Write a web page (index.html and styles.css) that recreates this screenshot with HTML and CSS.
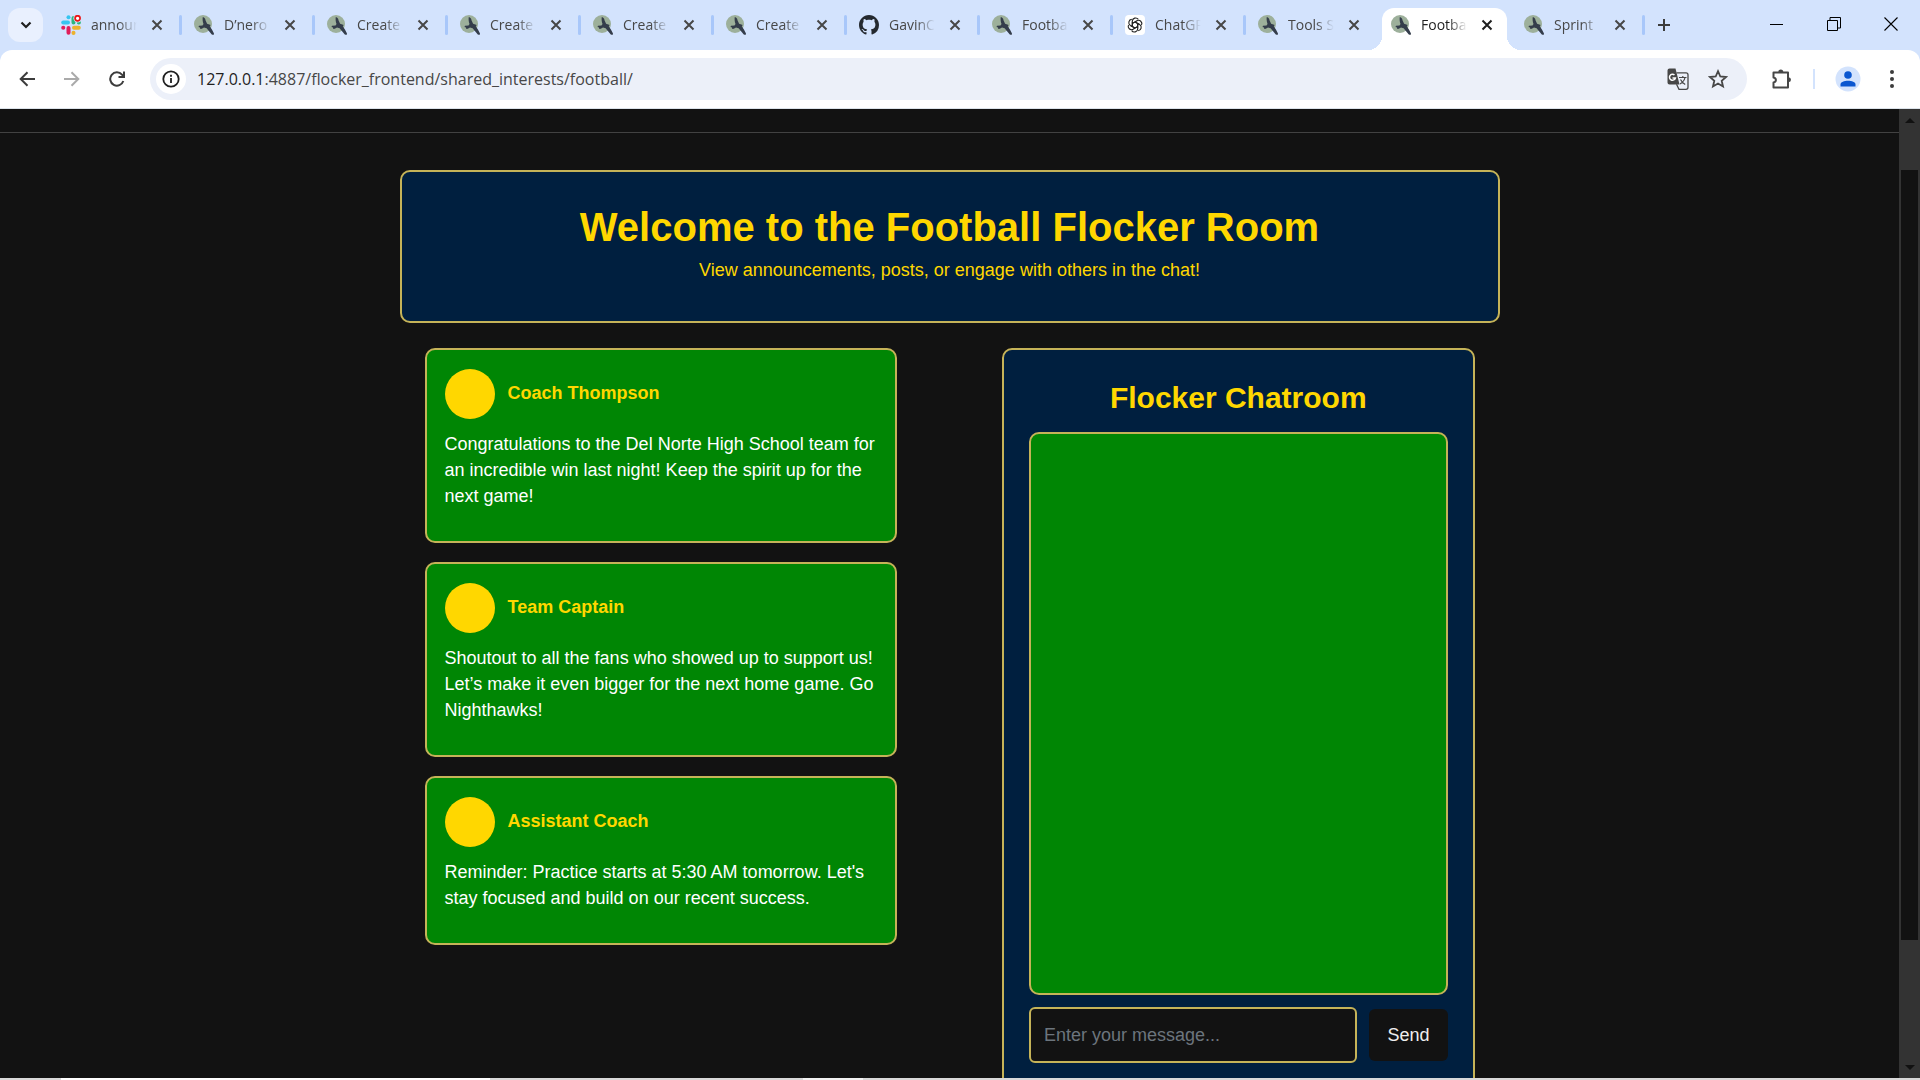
FILE: index.html
```html
<!DOCTYPE html>
<html lang="en">
<head>
<meta charset="utf-8">
<title>Football Flocker Room</title>
<link rel="stylesheet" href="styles.css">
</head>
<body>
<svg class="sprite" aria-hidden="true">
  <symbol id="bird" viewBox="0 0 20 20">
    <circle cx="9" cy="9" r="9" fill="#9db09b"/>
    <path d="M8.800 2c1.700.4 2.500 1.700 2.700 3.200l1.600 3.500 3.600 1.200-.9 1.300c1.500 2.300 3.100 4.700 4.200 7.300l-.5 1.500-1.700-.6-5.200-6.200-2.600-.8-2.200 1.300-1.500.3-.3-1.500-1.500-.5.500-1.200 3.500-.3 1-1.400c-.7-2.200-1.200-4.600-.7-7.100z" fill="#343d4b"/>
  </symbol>
  <symbol id="cross" viewBox="0 0 12 12">
    <path d="M1.500 1.500l9 9m0-9l-9 9" fill="none" stroke="currentColor" stroke-width="2"/>
  </symbol>
</svg>

<header class="browser">
  <div class="tabstrip">
    <button class="tab-search" aria-label="Search tabs"><svg width="12" height="8" viewBox="0 0 12 8"><path d="M1.500 1.500L6 6l4.500-4.500" fill="none" stroke="#1f1f1f" stroke-width="2.200"/></svg></button>
    <nav class="tabs" aria-label="Tabs">
      <div class="tab"><svg class="favicon" viewBox="0 0 20 20"><g stroke-width="4" stroke-linecap="round" fill="none"><path d="M2.200 7.500H7" stroke="#36c5f0"/><path d="M7.500 2.200v.1" stroke="#36c5f0"/><path d="M12.500 3v4.500M17.800 7.500h.1" stroke="#2eb67d"/><path d="M13 12.700h4.800M12.500 17.800v.1" stroke="#ecb22e"/><path d="M7.500 13v4.800M2.200 12.700h.1" stroke="#e01e5a"/></g><circle cx="16.600" cy="3.300" r="4.200" fill="#d3e3fd"/><circle cx="16.600" cy="3.300" r="2.500" fill="#fff" stroke="#eb1616" stroke-width="1.700"/></svg><a class="tab-title" href="#">announ</a><button class="tab-close" aria-label="Close tab"><svg><use href="#cross"/></svg></button></div>
      <div class="tab"><svg class="favicon"><use href="#bird"/></svg><a class="tab-title" href="#">D’nero</a><button class="tab-close" aria-label="Close tab"><svg><use href="#cross"/></svg></button></div>
      <div class="tab"><svg class="favicon"><use href="#bird"/></svg><a class="tab-title" href="#">Create</a><button class="tab-close" aria-label="Close tab"><svg><use href="#cross"/></svg></button></div>
      <div class="tab"><svg class="favicon"><use href="#bird"/></svg><a class="tab-title" href="#">Create</a><button class="tab-close" aria-label="Close tab"><svg><use href="#cross"/></svg></button></div>
      <div class="tab"><svg class="favicon"><use href="#bird"/></svg><a class="tab-title" href="#">Create</a><button class="tab-close" aria-label="Close tab"><svg><use href="#cross"/></svg></button></div>
      <div class="tab"><svg class="favicon"><use href="#bird"/></svg><a class="tab-title" href="#">Create</a><button class="tab-close" aria-label="Close tab"><svg><use href="#cross"/></svg></button></div>
      <div class="tab"><svg class="favicon" viewBox="0 0 16 16"><path fill="#24292f" d="M8 0C3.580 0 0 3.580 0 8c0 3.540 2.290 6.530 5.470 7.590.4.070.55-.17.55-.38 0-.19-.01-.82-.01-1.490-2.010.37-2.530-.49-2.690-.94-.09-.23-.48-.94-.82-1.130-.28-.15-.68-.52-.01-.53.63-.01 1.080.58 1.230.82.72 1.210 1.870.87 2.330.66.07-.52.28-.87.51-1.070-1.780-.2-3.640-.89-3.640-3.950 0-.87.31-1.590.82-2.150-.08-.2-.36-1.020.08-2.120 0 0 .67-.21 2.200.82.64-.18 1.320-.27 2-.27s1.360.09 2 .27c1.530-1.040 2.200-.82 2.200-.82.44 1.100.16 1.920.08 2.120.51.56.82 1.270.82 2.150 0 3.070-1.870 3.750-3.650 3.950.29.25.54.73.54 1.480 0 1.070-.01 1.930-.01 2.200 0 .21.15.46.55.38A8.010 8.010 0 0 0 16 8c0-4.420-3.580-8-8-8z"/></svg><a class="tab-title" href="#">GavinC</a><button class="tab-close" aria-label="Close tab"><svg><use href="#cross"/></svg></button></div>
      <div class="tab"><svg class="favicon"><use href="#bird"/></svg><a class="tab-title" href="#">Footba</a><button class="tab-close" aria-label="Close tab"><svg><use href="#cross"/></svg></button></div>
      <div class="tab"><svg class="favicon" viewBox="0 0 20 20"><rect width="20" height="20" rx="4" fill="#fff"/><g fill="none" stroke="#222" stroke-width="1.100"><path id="petal" d="M7.300 10.900V6.200a3.300 3.300 0 0 1 6-1.800M7.300 8.500l4.100-2.400"/><use href="#petal" transform="rotate(60 10 10)"/><use href="#petal" transform="rotate(120 10 10)"/><use href="#petal" transform="rotate(180 10 10)"/><use href="#petal" transform="rotate(240 10 10)"/><use href="#petal" transform="rotate(300 10 10)"/></g></svg><a class="tab-title" href="#">ChatGP</a><button class="tab-close" aria-label="Close tab"><svg><use href="#cross"/></svg></button></div>
      <div class="tab tab-before"><svg class="favicon"><use href="#bird"/></svg><a class="tab-title" href="#">Tools S</a><button class="tab-close" aria-label="Close tab"><svg><use href="#cross"/></svg></button></div>
      <div class="tab tab-active"><svg class="favicon"><use href="#bird"/></svg><a class="tab-title" href="#" aria-current="page">Footba</a><button class="tab-close" aria-label="Close tab"><svg><use href="#cross"/></svg></button></div>
      <div class="tab"><svg class="favicon"><use href="#bird"/></svg><a class="tab-title" href="#">Sprint</a><button class="tab-close" aria-label="Close tab"><svg><use href="#cross"/></svg></button></div>
    </nav>
    <button class="new-tab" aria-label="New tab"><svg width="14" height="14" viewBox="0 0 14 14"><path d="M7 1v12M1 7h12" stroke="#3c3c3c" stroke-width="2"/></svg></button>
    <div class="window-controls">
      <button aria-label="Minimize"><svg width="14" height="14" viewBox="0 0 14 14"><path d="M0 7.500h13" stroke="#000"/></svg></button>
      <button aria-label="Restore"><svg width="14" height="14" viewBox="0 0 14 14"><path d="M.5 3.500h10v10H.5zM3 3V.5h10.500V11H11" fill="none" stroke="#000"/></svg></button>
      <button aria-label="Close"><svg width="14" height="14" viewBox="0 0 14 14"><path d="M.5.5l13 13m0-13l-13 13" stroke="#000" stroke-width="1.100"/></svg></button>
    </div>
  </div>

  <div class="toolbar">
    <button class="tool" aria-label="Back"><svg width="16" height="16" viewBox="0 0 16 16"><path d="M16 8H2M8.500 1.200L1.700 8l6.800 6.800" fill="none" stroke="#3c3c3c" stroke-width="2"/></svg></button>
    <button class="tool" aria-label="Forward"><svg width="16" height="16" viewBox="0 0 16 16"><path d="M0 8h14M7.500 1.200L14.300 8l-6.800 6.800" fill="none" stroke="#aaa" stroke-width="2"/></svg></button>
    <button class="tool" aria-label="Reload"><svg width="16" height="16" viewBox="0 0 16 16"><path d="M14.300 10A6.700 6.700 0 1 1 13 3.600L14.600 5.500M15 .5v5.500H9.500" fill="none" stroke="#3c3c3c" stroke-width="2"/></svg></button>
    <div class="omnibox">
      <button class="site-info" aria-label="Site information"><svg width="18" height="18" viewBox="0 0 18 18"><circle cx="9" cy="9" r="7.700" fill="none" stroke="#1f1f1f" stroke-width="1.800"/><path d="M9 8v5M9 4.700v2" stroke="#1f1f1f" stroke-width="1.800"/></svg></button>
      <p class="url"><span class="host">127.0.0.1</span>:4887/flocker_frontend/shared_interests/football/</p>
      <button class="tool" aria-label="Translate"><svg width="22" height="22" viewBox="0 0 22 22"><path d="M2.500.5h6l4 16H2.500a2 2 0 0 1-2-2v-12a2 2 0 0 1 2-2z" fill="#474747"/><path d="M9.500 4.800h9.500a2 2 0 0 1 2 2v12.500a2 2 0 0 1-2 2h-7l-2.500-5" fill="none" stroke="#474747" stroke-width="1.300"/><path d="M7.500 7A3 3 0 1 0 8.400 10H5.500" fill="none" stroke="#fff" stroke-width="1.500"/><path d="M12 9.500h7.500M15.800 8v1.500M18 9.500c-.6 3-2.500 5-5 6.500M13.500 11.500c1 2 2.700 3.700 4.700 5" fill="none" stroke="#474747" stroke-width="1.200"/></svg></button>
      <button class="tool" aria-label="Bookmark"><svg width="20" height="20" viewBox="0 0 20 20"><path d="M10 2.200l2.300 5.300 5.700.5-4.300 3.800 1.300 5.700-5-3-5 3 1.300-5.700L2 8l5.700-.5z" fill="none" stroke="#474747" stroke-width="1.800"/></svg></button>
    </div>
    <button class="tool extensions" aria-label="Extensions"><svg width="22" height="22" viewBox="0 0 22 22"><path d="M2.500 4.500H17v15H2.500v-5c3.200-.6 3.200-4.400 0-5z" fill="none" stroke="#474747" stroke-width="2" stroke-linejoin="round"/><path d="M7.300 4a2.500 2.500 0 0 1 5 0zM17.500 9.200a2.500 2.500 0 0 1 0 5z" fill="#474747"/></svg></button>
    <span class="divider"></span>
    <button class="tool" aria-label="Profile"><svg width="26" height="26" viewBox="0 0 26 26"><circle cx="13" cy="13" r="12.500" fill="#d3e3fd"/><circle cx="13" cy="9" r="3.800" fill="#0b57d0"/><path d="M5.500 20.500v-2c0-5 15-5 15 0v2z" fill="#0b57d0"/></svg></button>
    <button class="tool menu" aria-label="Menu"><svg width="4" height="20" viewBox="0 0 4 20"><g fill="#3c3c3c"><circle cx="2" cy="3" r="2"/><circle cx="2" cy="10" r="2"/><circle cx="2" cy="17" r="2"/></g></svg></button>
  </div>
</header>

<div class="viewport">
  <main class="page">
    <hr class="rule">
    <div class="container">
      <section class="banner">
        <h1>Welcome to the Football Flocker Room</h1>
        <p>View announcements, posts, or engage with others in the chat!</p>
      </section>
      <div class="columns">
        <section class="posts">
          <article class="post">
            <header><span class="avatar"></span><h2>Coach Thompson</h2></header>
            <p>Congratulations to the Del Norte High School team for an incredible win last night! Keep the spirit up for the next game!</p>
          </article>
          <article class="post">
            <header><span class="avatar"></span><h2>Team Captain</h2></header>
            <p>Shoutout to all the fans who showed up to support us! Let’s make it even bigger for the next home game. Go Nighthawks!</p>
          </article>
          <article class="post">
            <header><span class="avatar"></span><h2>Assistant Coach</h2></header>
            <p>Reminder: Practice starts at 5:30 AM tomorrow. Let's stay focused and build on our recent success.</p>
          </article>
        </section>
        <section class="chat">
          <h2>Flocker Chatroom</h2>
          <div class="messages"></div>
          <form class="compose">
            <input type="text" placeholder="Enter your message..." aria-label="Message">
            <button type="button">Send</button>
          </form>
        </section>
      </div>
    </div>
  </main>
  <div class="scrollbar">
    <svg width="10" height="5" viewBox="0 0 10 5"><path d="M0 5l5-5 5 5z" fill="#111"/></svg>
    <div class="track"><div class="thumb"></div></div>
    <svg width="10" height="5" viewBox="0 0 10 5"><path d="M0 0l5 5 5-5z" fill="#111"/></svg>
  </div>
</div>
<footer class="taskbar"><span class="search-edge"></span><span class="app-edge"></span></footer>
</body>
</html>
```
FILE: styles.css
```css
* { box-sizing: border-box; }

body {
  margin: 0;
  height: 100vh;
  display: flex;
  flex-direction: column;
  overflow: hidden;
  background: #121212;
  font-family: "Liberation Sans", Arial, sans-serif;
  font-size: 18px;
}

button {
  padding: 0;
  border: 0;
  background: none;
  font: inherit;
  color: inherit;
}

h1, h2, p { margin: 0; }
svg { display: block; }
.sprite { position: absolute; width: 0; height: 0; }

/* Browser frame */
.browser {
  flex: none;
  background: #d3e3fd;
  font-family: "Open Sans", "Noto Sans", sans-serif;
  color: #474747;
}

.tabstrip {
  display: flex;
  height: 50px;
  padding-left: 8px;
}

.tab-search {
  flex: none;
  display: grid;
  place-items: center;
  width: 35px;
  height: 34px;
  margin: 8px 5px 0 0;
  border-radius: 12px;
  background: #e9f0fe;
}

.tabs {
  flex: 0 1 1596px;
  display: flex;
  min-width: 0;
}

.tab {
  position: relative;
  flex: 1 1 0;
  min-width: 0;
  display: flex;
  align-items: center;
  padding: 0 14px 0 13px;
}

.tab::after {
  content: "";
  position: absolute;
  right: -1px;
  top: 15px;
  width: 3px;
  height: 20px;
  border-radius: 2px;
  background: #a8c7fa;
}

.tab-before::after { display: none; }

.favicon {
  flex: none;
  width: 20px;
  height: 20px;
}

.tab-title {
  flex: 1 1 0;
  min-width: 0;
  margin: 0 10px;
  overflow: hidden;
  white-space: nowrap;
  font-size: 14px;
  line-height: 24px;
  color: inherit;
  text-decoration: none;
  mask-image: linear-gradient(to right, #000 60%, transparent 100%);
}

.tab-close {
  flex: none;
  width: 20px;
  height: 20px;
  display: grid;
  place-items: center;
}

.tab-close svg { width: 12px; height: 12px; }

.tab-active {
  z-index: 0;
  color: #1f1f1f;
}

.tab-active::before {
  content: "";
  position: absolute;
  z-index: -1;
  inset: 8px 4px 0;
  border-radius: 12px 12px 0 0;
  background: #fff;
}

/* Flared feet either side of the active tab */
.tab-active::after {
  z-index: -1;
  inset: auto -10px 0;
  width: auto;
  height: 14px;
  border-radius: 0;
  background:
    radial-gradient(circle at 0 0, transparent 14px, #fff 14px) left / 14px 14px no-repeat,
    radial-gradient(circle at 100% 0, transparent 14px, #fff 14px) right / 14px 14px no-repeat;
}

.new-tab {
  flex: none;
  width: 40px;
  display: grid;
  place-items: center;
}

.window-controls {
  flex: none;
  display: flex;
  margin-left: auto;
  padding: 0 1px 2px 0;
}

.window-controls button {
  width: 57px;
  display: grid;
  place-items: center;
}

.toolbar {
  display: flex;
  align-items: center;
  height: 59px;
  padding: 0 10px 0 4px;
  border-bottom: 1px solid #dce3ea;
  border-radius: 12px 12px 0 0;
  background: #fff;
}

.tool {
  flex: none;
  width: 45px;
  height: 40px;
  display: grid;
  place-items: center;
}

.omnibox {
  flex: 1;
  min-width: 0;
  display: flex;
  align-items: center;
  height: 42px;
  margin-left: 11px;
  padding: 0 9px 0 6px;
  border-radius: 21px;
  background: #ecf0f9;
}

.omnibox .tool { width: 40px; }

.site-info {
  flex: none;
  display: grid;
  place-items: center;
  width: 30px;
  height: 30px;
  border-radius: 50%;
  background: #fff;
}

.url {
  flex: 1;
  min-width: 0;
  margin-left: 11px;
  overflow: hidden;
  white-space: nowrap;
  font-size: 16px;
  line-height: 24px;
}

.host { color: #1f1f1f; }
.extensions { margin-left: 12px; }

.divider {
  width: 2px;
  height: 20px;
  margin: 0 10px 0 9px;
  background: #d3e3fd;
}

.menu { width: 36px; margin-left: 4px; }

/* Page */
.viewport {
  flex: 1;
  min-height: 0;
  display: flex;
}

.page {
  flex: 1;
  min-width: 0;
  overflow: hidden;
  color: #fff;
}

.rule {
  margin: 23px 0 37px;
  border: 0;
  border-top: 1px solid #424242;
}

.container {
  max-width: 1100px;
  margin: 0 auto;
}

.banner,
.post,
.chat,
.messages {
  border: 2px solid #c5b358;
  border-radius: 10px;
}

.banner {
  padding: 30px 23px 38px;
  background: #001f3f;
  color: #ffd700;
  text-align: center;
}

.banner h1 {
  font-size: 40px;
  line-height: 50px;
}

.banner p {
  margin-top: 5px;
  line-height: 26px;
}

.columns {
  display: flex;
  justify-content: space-between;
  align-items: flex-start;
  padding: 25px 25px 0;
}

.posts {
  width: 45%;
  display: flex;
  flex-direction: column;
  gap: 19px;
}

.post {
  padding: 19px 18px 32px;
  background: #008604;
}

.post header {
  display: flex;
  align-items: center;
  gap: 13px;
  margin-bottom: 12px;
}

.avatar {
  flex: none;
  width: 50px;
  height: 50px;
  border-radius: 50%;
  background: #ffd700;
}

.post h2 {
  padding-bottom: 2px;
  font-size: 18px;
  line-height: 26px;
  color: #ffd700;
}

.post p { line-height: 26px; }

.chat {
  width: 45%;
  padding: 25px;
  background: #001f3f;
}

.chat h2 {
  margin-bottom: 12px;
  font-size: 30px;
  line-height: 45px;
  color: #ffd700;
  text-align: center;
}

.messages {
  height: 563px;
  background: #008604;
}

.compose {
  display: flex;
  align-items: center;
  gap: 12px;
  margin-top: 12px;
}

.compose input {
  flex: 1;
  min-width: 0;
  height: 56px;
  padding: 0 13px;
  border: 2px solid #c5b358;
  border-radius: 6px;
  background: #121212;
  color: #fff;
  font: inherit;
}

.compose input::placeholder { color: #6c757d; }

.compose button {
  height: 52px;
  padding: 0 18px;
  border-radius: 6px;
  background: #121212;
  color: #eee;
}

/* Scrollbar */
.scrollbar {
  flex: none;
  width: 21px;
  display: flex;
  flex-direction: column;
  align-items: center;
  padding: 9px 0 8px;
  background: #333;
}

.track {
  flex: 1;
  width: 17px;
  padding: 47px 0 0;
}

.thumb {
  height: 86%;
  background: #121212;
}

/* Top edge of the desktop taskbar */
.taskbar {
  flex: none;
  display: flex;
  height: 2px;
  padding-left: 61px;
  background: #d9d9d9;
}

.search-edge { width: 429px; background: #fff; }
.app-edge { width: 60px; margin-left: 313px; background: #f2f2f2; }
```
